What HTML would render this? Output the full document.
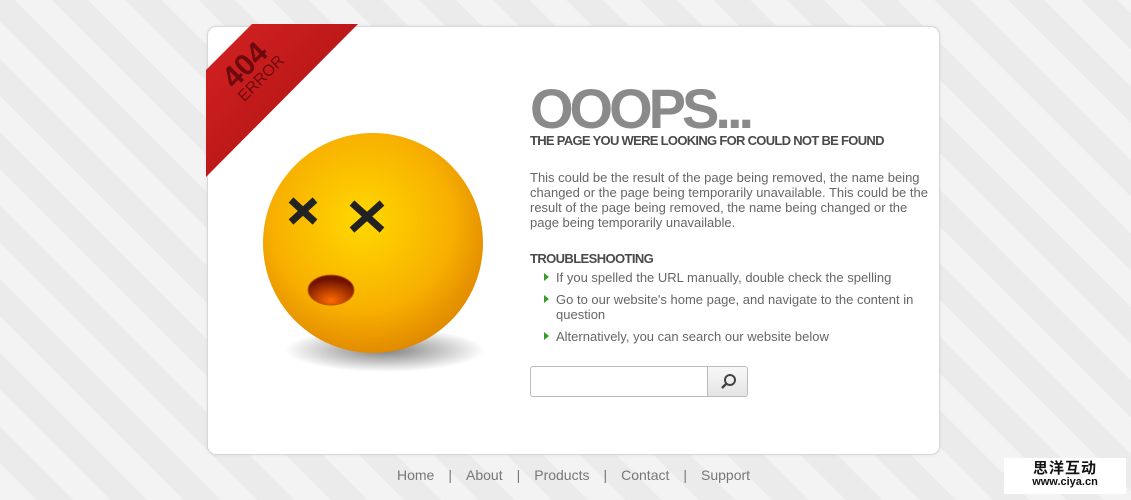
<!DOCTYPE html>
<html><head><meta charset="utf-8"><style>
*{margin:0;padding:0;box-sizing:border-box}
body{width:1131px;height:500px;overflow:hidden;font-family:"Liberation Sans",Arial,sans-serif;
background:repeating-linear-gradient(45deg,#f3f3f3 0 26px,#ebebeb 26px 52px);position:relative}
.card{position:absolute;left:207px;top:26px;width:733px;height:429px;background:#fff;border:1px solid #d8d8d8;border-radius:9px;box-shadow:0 0 3px rgba(0,0,0,.08)}
.t{position:absolute;color:#555}
h1{position:absolute;left:530px;top:76px;font-size:56px;font-weight:bold;color:#8a8a8a;letter-spacing:-4px}
.sub{left:530px;top:133px;font-size:13px;font-weight:bold;letter-spacing:-0.7px;color:#4a4a4a}
.p{left:530px;top:170px;width:400px;font-size:13px;line-height:15px;color:#666}
.ts{left:530px;top:251px;font-size:13px;font-weight:bold;letter-spacing:-0.6px;color:#4a4a4a}
ul{position:absolute;left:544px;top:270px;width:380px;list-style:none;font-size:13px;color:#666;line-height:15px}
li{padding-left:12px;position:relative;margin-bottom:7px}
li:before{content:"";position:absolute;left:0;top:3px;border-left:5px solid #3a9a2a;border-top:4px solid transparent;border-bottom:4px solid transparent}
.search{position:absolute;left:530px;top:366px;width:218px;height:31px;border:1px solid #bbb;border-radius:3px;background:#fff;overflow:hidden}
.btn{position:absolute;right:0;top:0;width:40px;height:29px;border-left:1px solid #bbb;background:linear-gradient(#f8f8f8,#e4e4e4)}
.foot{position:absolute;top:467px;left:397px;font-size:14px;color:#777;white-space:nowrap}
.foot span{margin:0 14px}
.logo{position:absolute;left:1004px;top:458px;width:122px;height:36px;background:#fff;text-align:center;font-family:"Noto Sans CJK SC",sans-serif;font-weight:bold;color:#111;line-height:14px;padding-top:3px}
</style></head><body>
<div class="card"></div>
<svg width="1131" height="500" style="position:absolute;left:0;top:0">
<defs>
<linearGradient id="r2" x1="0" y1="0" x2="1" y2="1"><stop offset="0" stop-color="#d42222"/><stop offset="1" stop-color="#a80f12"/></linearGradient>
<radialGradient id="f2" cx="0.45" cy="0.4" r="0.62"><stop offset="0" stop-color="#ffd800"/><stop offset="0.65" stop-color="#f8b000"/><stop offset="1" stop-color="#e08800"/></radialGradient>
<radialGradient id="s2" cx="0.5" cy="0.5" r="0.5"><stop offset="0" stop-color="rgba(0,0,0,.5)"/><stop offset="1" stop-color="rgba(0,0,0,0)"/></radialGradient>
<radialGradient id="m2" cx="0.5" cy="0.85" r="0.7"><stop offset="0" stop-color="#ff6a00"/><stop offset="1" stop-color="#701200"/></radialGradient>
</defs>
<polygon points="252,24 358,24 206,177 206,70" fill="url(#r2)"/>
<g transform="translate(252,72) rotate(-45)" fill="#6e0a0d" font-family="Liberation Sans" font-weight="bold" text-anchor="middle">
<text x="0" y="0" font-size="30">404</text>
<text x="2" y="16" font-size="16" font-weight="normal">ERROR</text>
</g>
<ellipse cx="385" cy="350" rx="100" ry="22" fill="url(#s2)"/>
<circle cx="373" cy="243" r="110" fill="url(#f2)"/>
<g stroke="#222" stroke-width="7">
<path d="M291 200 L315 222 M315 200 L291 222"/>
<path d="M352 203 L382 230 M382 203 L352 230"/>
</g>
<ellipse cx="331" cy="290" rx="23" ry="15" fill="url(#m2)" stroke="#c05a00" stroke-width="1"/>
</svg>
<h1>OOOPS...</h1>
<div class="t sub">THE PAGE YOU WERE LOOKING FOR COULD NOT BE FOUND</div>
<div class="t p">This could be the result of the page being removed, the name being changed or the page being temporarily unavailable. This could be the result of the page being removed, the name being changed or the page being temporarily unavailable.</div>
<div class="t ts">TROUBLESHOOTING</div>
<ul>
<li>If you spelled the URL manually, double check the spelling</li>
<li>Go to our website's home page, and navigate to the content in question</li>
<li>Alternatively, you can search our website below</li>
</ul>
<div class="search"><div class="btn"><svg width="40" height="29"><circle cx="22" cy="13" r="5" fill="none" stroke="#444" stroke-width="2"/><path d="M18.5 16.5 L14 21" stroke="#444" stroke-width="2.5"/></svg></div></div>
<div class="foot">Home<span>|</span>About<span>|</span>Products<span>|</span>Contact<span>|</span>Support</div>
<div class="logo"><div style="font-size:15px;letter-spacing:1px">思洋互动</div><div style="font-family:'Liberation Sans';font-size:11px">www.ciya.cn</div></div>
</body></html>
